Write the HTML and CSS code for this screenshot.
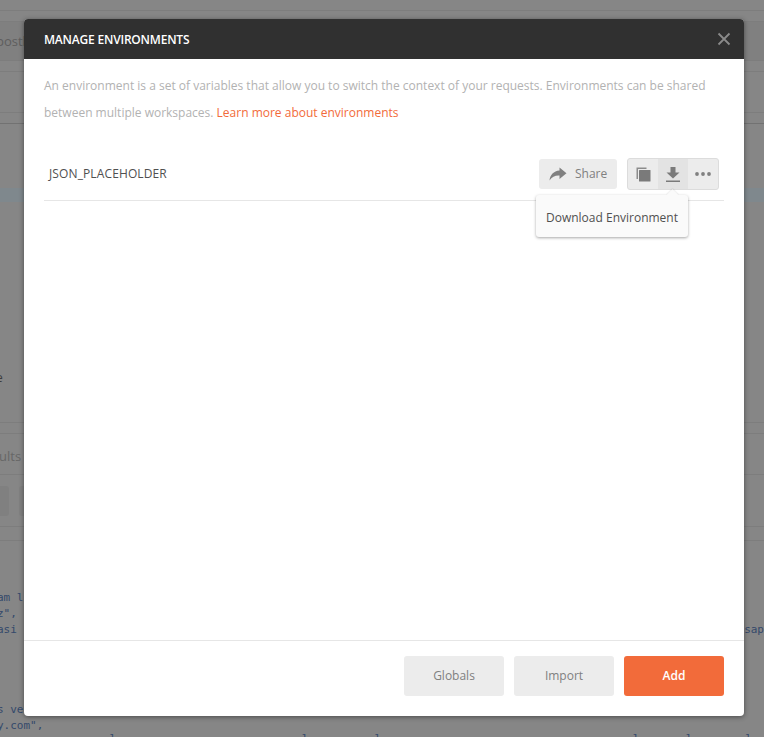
FILE: index.html
```html
<!DOCTYPE html>
<html lang="en">
<head>
<meta charset="utf-8">
<title>Manage Environments</title>
<link rel="stylesheet" href="styles.css">
</head>
<body>
<div class="app">
  <div class="bar bar-a"></div>
  <div class="bar bar-b"></div>
  <div class="bar bar-c"><span class="tab-text">postl</span></div>
  <div class="bar bar-d"></div>
  <div class="bar bar-e"></div>
  <div class="bar bar-k"></div>
  <div class="bar bar-f"><span class="stray">e</span></div>
  <div class="bar bar-g"></div>
  <div class="bar bar-h"><span class="tab-text tab-results">ults</span></div>
  <div class="bar bar-i"><span class="ghost"></span><span class="ghost"></span></div>
  <div class="bar bar-j"></div>
  <pre class="code"><span>am l</span>
<span>z",</span>
<span>asi</span><span class="code-right">sap</span>




<span>s ve</span>
<span>y.com",</span>
<span class="code-last">                 l                            l          l                                      l       l        l</span></pre>
</div>

<div class="modal">
  <header class="modal-head">
    <h1 class="modal-title">MANAGE ENVIRONMENTS</h1>
    <svg class="close" viewBox="0 0 14 14" width="14" height="14"><path d="M1.500 1.500l11 11M12.500 1.500l-11 11" stroke="#8a8a8a" stroke-width="1.800" fill="none"/></svg>
  </header>
  <div class="modal-body">
    <p class="intro">An environment is a set of variables that allow you to switch the context of your requests. Environments can be shared between multiple workspaces. <a class="link">Learn more about environments</a></p>
    <div class="env-row">
      <span class="env-name">JSON_PLACEHOLDER</span>
      <button class="share">
        <svg viewBox="0 0 18 14" width="18" height="14"><path d="M10.500 0.500L17.500 6.200 10.500 12V8.400C6 8.200 3 9.600 0.500 13.500 1.200 7.800 4.500 4.200 10.500 3.600z" fill="#808080"/></svg>
        <span class="share-label">Share</span>
      </button>
      <div class="tools">
        <span class="tool">
          <svg viewBox="0 0 15 15" width="15" height="15"><path d="M0.500 0.500h10v1.500H2v10H0.500z" fill="#8c8c8c"/><rect x="3" y="3" width="11.500" height="11.500" rx=".5" fill="#7a7a7a"/></svg>
        </span>
        <span class="tool tool-on">
          <svg viewBox="0 0 14 15" width="14" height="15"><path d="M4.500 0h5v5.500H13.500L7 11.500 0.500 5.500H4.500z" fill="#7a7a7a"/><rect y="13.500" width="14" height="1.500" fill="#7a7a7a"/></svg>
        </span>
        <span class="tool">
          <svg viewBox="0 0 16 4" width="16" height="4"><circle cx="2" cy="2" r="1.900" fill="#808080"/><circle cx="8" cy="2" r="1.900" fill="#808080"/><circle cx="14" cy="2" r="1.900" fill="#808080"/></svg>
        </span>
        <div class="tip">Download Environment</div>
      </div>
    </div>
  </div>
  <footer class="modal-foot">
    <button class="btn">Globals</button>
    <button class="btn">Import</button>
    <button class="btn btn-add">Add</button>
  </footer>
</div>
</body>
</html>
```

FILE: styles.css
```css
* { box-sizing: border-box; }
html, body { margin: 0; height: 100%; overflow: hidden; }
body { width: 764px; height: 737px; background: #868686; font-family: "Open Sans", "Liberation Sans", sans-serif; font-size: 12px; position: relative; }

.app { height: 737px; display: flex; flex-direction: column; overflow: hidden; }
.bar { border-bottom: 1px solid #7d7d7d; flex: none; }
.bar-a { height: 11px; }
.bar-b { height: 11px; }
.bar-c { height: 39px; display: flex; align-items: center; background: #808080; }
.bar-d { height: 11px; }
.bar-e { height: 41px; }
.bar-k { height: 11px; border-bottom-color: #727272; }
.bar-f { height: 299px; background: linear-gradient(#868686 64px, #7f888d 64px, #7f888d 78px, #868686 78px); display: flex; align-items: flex-end; padding-bottom: 36px; }
.bar-g { height: 11px; }
.bar-h { height: 41px; display: flex; align-items: center; padding-top: 4px; }
.bar-i { height: 52px; display: flex; align-items: center; gap: 10px; }
.bar-j { height: 14px; }
.tab-text { color: #5e5e5e; margin-left: -4px; font-size: 13px; }
.tab-results { margin-left: -1px; color: #666; }
.stray { color: #3d3d3d; margin-left: -4px; }
.ghost { width: 27px; height: 30px; background: #808080; border-radius: 3px; margin-left: -18px; }
.ghost + .ghost { margin-left: 0; }
.code { margin: 49px 0 0 -3px; flex: none; font-family: "DejaVu Sans Mono", "Liberation Mono", monospace; font-size: 11px; line-height: 16px; color: #34496b; position: relative; }
.code-right { position: absolute; right: 0; top: 32px; }
.code-last { position: relative; top: -3px; }

.modal { position: absolute; left: 24px; top: 19px; width: 720px; height: 697px; background: #fff; border-radius: 4px; box-shadow: 0 1px 5px rgba(0,0,0,.45); display: flex; flex-direction: column; }
.modal-head { height: 40px; flex: none; background: #303030; border-radius: 4px 4px 0 0; display: flex; align-items: center; justify-content: space-between; padding: 0 13px 0 20px; }
.modal-title { margin: 0; color: #fff; font-size: 12px; font-weight: 600; letter-spacing: -.2px; }
.close { display: block; }
.modal-body { flex: 1; padding: 13px 20px 0; }
.intro { margin: 0; color: #b2b2b2; line-height: 27px; }
.link { color: #f26b3a; }
.env-row { margin-top: 19px; height: 56px; display: flex; align-items: center; border-bottom: 1px solid #e6e6e6; padding: 3px 5px 0; }
.env-name { flex: 1; color: #505050; margin-bottom: 2px; letter-spacing: .12px; }
.share { width: 78px; height: 30px; border: 0; border-radius: 3px; background: #ececec; color: #808080; font: inherit; display: flex; align-items: center; gap: 8px; padding: 0 0 0 10px; margin-right: 10px; }
.share-label { margin-bottom: 1px; }
.tools { position: relative; display: flex; height: 32px; border: 1px solid #dcdcdc; border-radius: 3px; background: #ececec; }
.tool { width: 30px; display: flex; align-items: center; justify-content: center; }
.tool-on { background: #e3e3e3; }
.tip { position: absolute; left: -92px; top: 36px; width: 152px; height: 42px; padding-top: 3px; background: #fafafa; border-radius: 3px; box-shadow: 0 1px 3px rgba(0,0,0,.35); display: flex; align-items: center; justify-content: center; color: #505050; white-space: nowrap; }
.tip::before { content: ""; position: absolute; left: 132px; top: -4px; width: 9px; height: 9px; background: #fafafa; transform: rotate(45deg); box-shadow: -1px -1px 1px rgba(0,0,0,.06); }

.modal-foot { height: 76px; flex: none; border-top: 1px solid #e6e6e6; display: flex; justify-content: flex-end; align-items: flex-start; gap: 10px; padding: 15px 20px 0; }
.btn { width: 100px; height: 40px; border: 0; border-radius: 3px; background: #ececec; color: #808080; font: inherit; padding: 0 0 2px; }
.btn-add { background: #f26b3a; color: #fff; font-weight: 600; }
```
